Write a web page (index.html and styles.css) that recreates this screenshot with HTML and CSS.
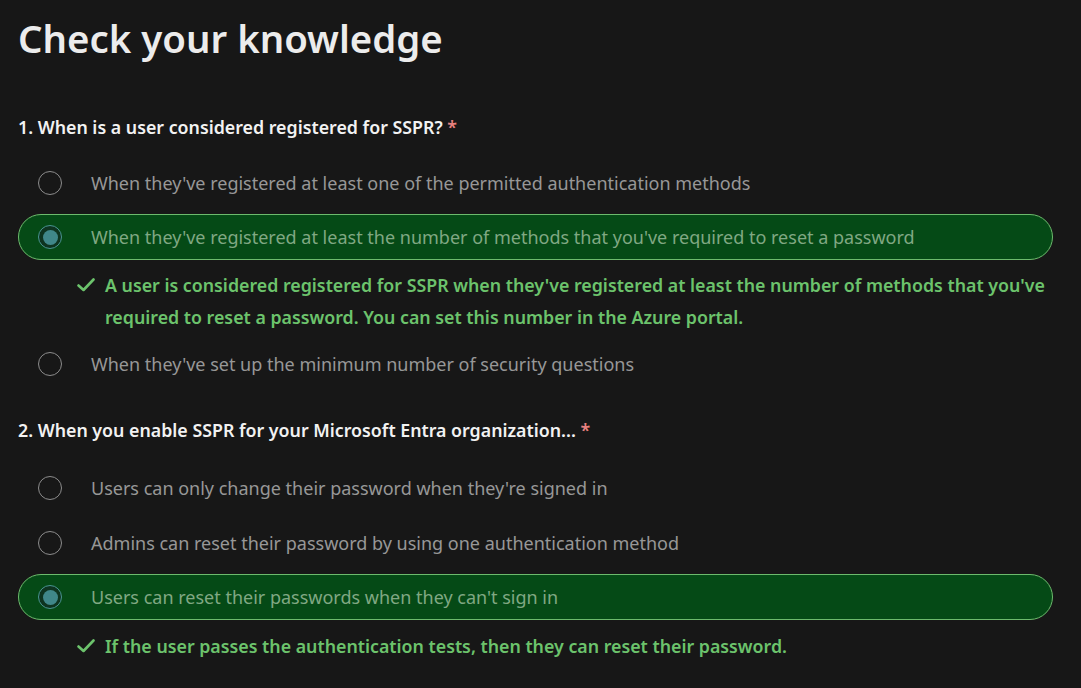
FILE: index.html
```html
<!DOCTYPE html>
<html lang="en">
<head>
<meta charset="utf-8">
<title>Check your knowledge</title>
<link rel="stylesheet" href="styles.css">
</head>
<body>
<main class="page">
  <h1 class="title">Check your knowledge</h1>

  <section class="question">
    <h2 class="q-text">1. When is a user considered registered for SSPR? <span class="req">*</span></h2>
    <div class="options">
      <div class="option">
        <span class="radio"></span>
        <span class="opt-text">When they've registered at least one of the permitted authentication methods</span>
      </div>
      <div class="option selected">
        <span class="radio"><span class="dot"></span></span>
        <span class="opt-text">When they've registered at least the number of methods that you've required to reset a password</span>
      </div>
      <div class="explain">
        <svg class="check" viewBox="0 0 18 14" width="18" height="14"><path d="M1.5 7.5 L6.5 12 L16.5 1.5" fill="none" stroke="#6cc36c" stroke-width="2.6" stroke-linecap="round" stroke-linejoin="round"/></svg>
        <p class="explain-text">A user is considered registered for SSPR when they've registered at least the number of methods that you've required to reset a password. You can set this number in the Azure portal.</p>
      </div>
      <div class="option">
        <span class="radio"></span>
        <span class="opt-text">When they've set up the minimum number of security questions</span>
      </div>
    </div>
  </section>

  <section class="question">
    <h2 class="q-text">2. When you enable SSPR for your Microsoft Entra organization... <span class="req">*</span></h2>
    <div class="options">
      <div class="option">
        <span class="radio"></span>
        <span class="opt-text">Users can only change their password when they're signed in</span>
      </div>
      <div class="option">
        <span class="radio"></span>
        <span class="opt-text">Admins can reset their password by using one authentication method</span>
      </div>
      <div class="option selected">
        <span class="radio"><span class="dot"></span></span>
        <span class="opt-text">Users can reset their passwords when they can't sign in</span>
      </div>
      <div class="explain">
        <svg class="check" viewBox="0 0 18 14" width="18" height="14"><path d="M1.5 7.5 L6.5 12 L16.5 1.5" fill="none" stroke="#6cc36c" stroke-width="2.6" stroke-linecap="round" stroke-linejoin="round"/></svg>
        <p class="explain-text">If the user passes the authentication tests, then they can reset their password.</p>
      </div>
    </div>
  </section>
</main>
</body>
</html>
```

FILE: styles.css
```css
html, body {
  margin: 0;
  padding: 0;
  background: #171717;
}

body {
  font-family: "Noto Sans", "Open Sans", sans-serif;
  color: #e6e6e6;
}

.page {
  width: 1081px;
  height: 688px;
  overflow: hidden;
  padding: 0 28px 0 18px;
  box-sizing: border-box;
}

.title {
  margin: 0;
  padding-top: 14px;
  font-size: 38.4px;
  line-height: 48px;
  font-weight: 600;
  color: #ececec;
}

.question {
  margin-top: 52px;
}

.question + .question {
  margin-top: 30px;
}

.question + .question .options {
  margin-top: 22px;
  gap: 8.5px;
}

.q-text {
  margin: 0;
  font-size: 17.8px;
  line-height: 26px;
  font-weight: 600;
  color: #f2f2f2;
}

.req {
  color: #e8817f;
}

.options {
  display: flex;
  flex-direction: column;
  gap: 8px;
  margin-top: 20px;
}

.option {
  display: flex;
  align-items: center;
  height: 46px;
  box-sizing: border-box;
  border: 1px solid transparent;
  border-radius: 23px;
  padding-left: 19px;
}

.option.selected {
  background: #054a16;
  border-color: #6dbb6d;
}

.radio {
  width: 24px;
  height: 24px;
  box-sizing: border-box;
  border: 1px solid #8c8c8c;
  border-radius: 50%;
  flex: none;
  display: flex;
  align-items: center;
  justify-content: center;
}

.selected .radio {
  border: 1px solid #4a9592;
  background: #0e3420;
}

.dot {
  width: 15px;
  height: 15px;
  border-radius: 50%;
  background: #40878a;
}

.opt-text {
  margin-left: 29px;
  font-size: 18px;
  color: #979797;
  white-space: nowrap;
}

.selected .opt-text {
  color: #80a883;
}

.explain {
  display: flex;
  align-items: flex-start;
  padding-left: 59px;
  margin-top: 1px;
}

.check {
  flex: none;
  margin-top: 9px;
}

.explain-text {
  margin: 0 0 0 10px;
  font-size: 17.8px;
  line-height: 32px;
  font-weight: 600;
  color: #6cc36c;
}
```
